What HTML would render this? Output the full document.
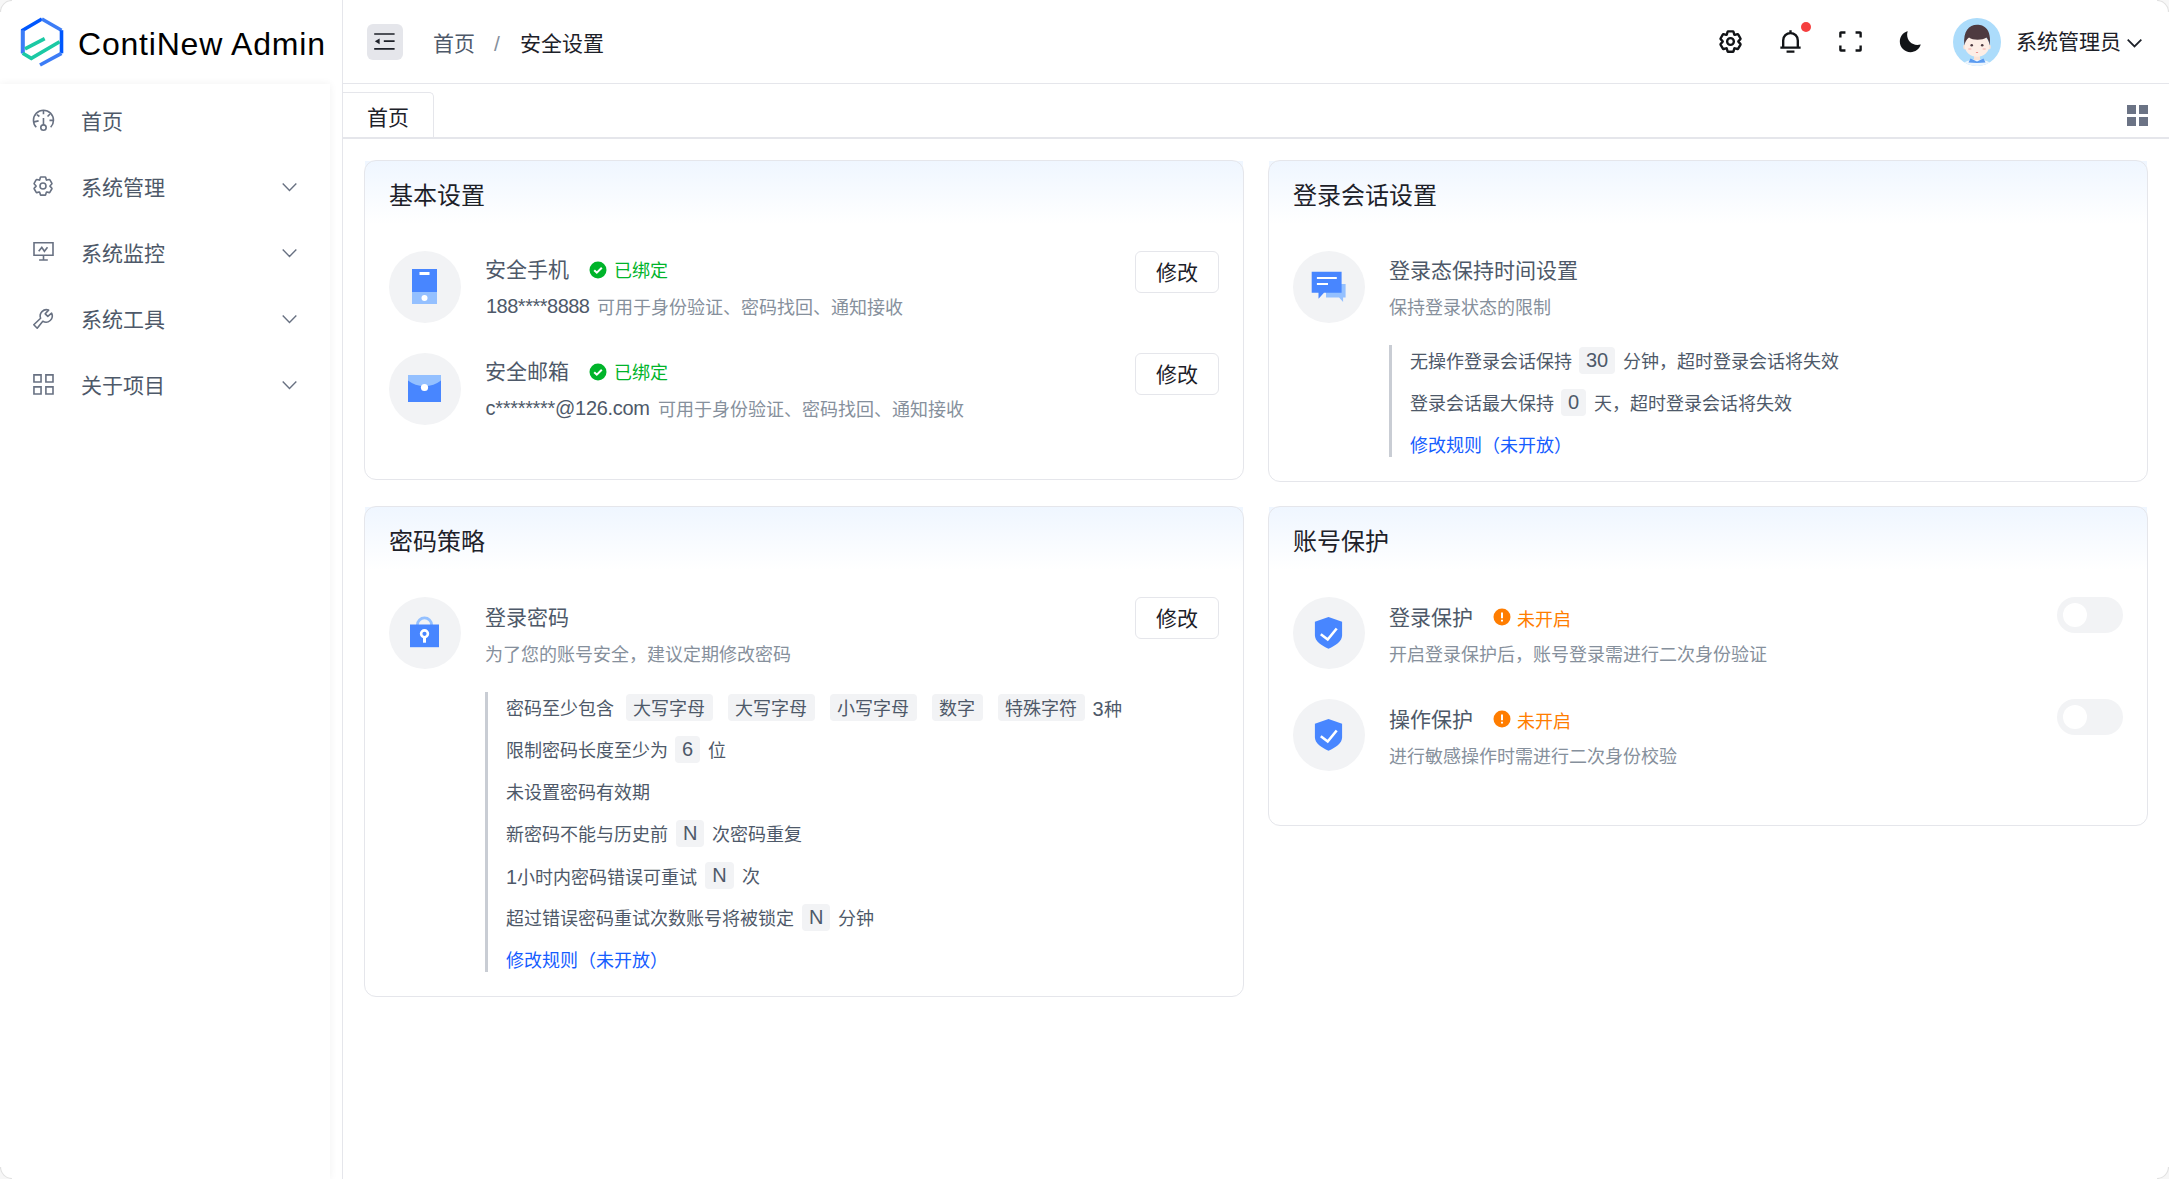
<!DOCTYPE html>
<html lang="zh-CN"><head><meta charset="utf-8">
<style>
*{box-sizing:border-box;margin:0;padding:0}
html,body{width:2169px;height:1179px;overflow:hidden;background:#fff}
body{position:relative;font-family:"Liberation Sans",sans-serif;color:#1d2129}
.a{position:absolute}
.t{position:absolute;white-space:pre;line-height:1}
svg{position:absolute;overflow:visible}
.side{left:0;top:0;width:343px;height:1179px;border-right:1px solid #e5e6eb;background:#fff}
.menu{left:0;top:84px;width:330px;height:1095px;background:#fff;box-shadow:0 0 8px rgba(0,0,0,0.06)}
.mi{font-size:21px;color:#4e5969}
.ic{stroke:#687182;fill:none;stroke-width:3.2}
.card{position:absolute;border:1px solid #e5e6eb;border-radius:12px}
.card .hd{position:absolute;left:0;top:0;right:0;height:64px;background:linear-gradient(180deg,#eff6ff 0%,#fff 100%)}
.ctitle{font-size:24px;color:#1d2129}
.circ{position:absolute;width:72px;height:72px;border-radius:50%;background:#f2f3f5}
.itit{font-size:21px;color:#4e5969}
.desc{font-size:18px;color:#86909c}
.btn{position:absolute;width:84px;height:42px;border:1px solid #e5e6eb;border-radius:6px;background:#fff;font-size:21px;color:#1d2129;text-align:center;line-height:42px}
.bar{position:absolute;width:3px;background:#c9cdd4}
.ln{font-size:18px;color:#4e5969}
.tag{display:inline-block;background:#f2f3f5;border-radius:4px;height:27px;line-height:27px;padding:0 7px;vertical-align:middle}
.lat{font-size:20px}
.link{font-size:18px;color:#165dff}
.sw{position:absolute;width:66px;height:36px;border-radius:18px;background:#f2f3f5}
.sw::after{content:"";position:absolute;left:6px;top:6px;width:24px;height:24px;border-radius:50%;background:#fff}
</style></head><body>


<!-- sidebar -->
<div class="a side"></div>
<div class="a menu"></div>
<svg style="left:0;top:0" width="90" height="84" viewBox="0 0 90 84">
  <g fill="none" stroke-width="3.6" stroke-linecap="butt" stroke-linejoin="miter">
    <path d="M22.7 53.3 V30.2 L41.9 19" stroke="#0057fe"/>
    <path d="M22.7 53.3 V30.2" stroke="#3c7cf6"/>
    <path d="M41.9 19 L61.5 30.2" stroke="#3c7cf6"/>
    <path d="M61.5 30.2 V53.3" stroke="#0057fe"/>
    <path d="M61.5 53.3 L40 65" stroke="#3c7cf6"/>
    <path d="M22.7 53.3 L31.3 58.4 L59.6 41.8" stroke="#1bc9a4"/>
    <path d="M25 48.8 L44.7 38.6" stroke="#1bc9a4"/>
  </g>
</svg>
<div class="t" style="left:78px;top:28px;font-size:32px;letter-spacing:0.8px;color:#000">ContiNew Admin</div>

<!-- menu items -->
<svg style="left:31px;top:108px" width="24" height="24" viewBox="0 0 48 48" class="ic"><path d="M10.55 38.47A20 20 0 1 1 39.33 38.47"/><path d="M24.94 4.5V12.6M5.9 27.8L15.2 25.7M36.9 24.8H44.5M11.9 13.2L16.8 17M33.1 17L38 12.1M24.94 20.2V33.8"/><circle cx="24.94" cy="39.2" r="5.4"/></svg>
<div class="t mi" style="left:81px;top:111px">首页</div>

<svg style="left:31px;top:174px" width="24" height="24" viewBox="0 0 48 48" class="ic"><path d="M18.8 6.7A1 1 0 0 1 19.8 6h8.5a1 1 0 0 1 1 .7l1.3 4.7a1 1 0 0 0 1.2.7l4.7-1.2a1 1 0 0 1 1.1.5l4.2 7.3a1 1 0 0 1-.2 1.2l-3.4 3.5a1 1 0 0 0 0 1.4l3.4 3.5a1 1 0 0 1 .2 1.2l-4.2 7.3a1 1 0 0 1-1.1.5l-4.7-1.2a1 1 0 0 0-1.2.7l-1.3 4.7a1 1 0 0 1-1 .7h-8.5a1 1 0 0 1-1-.7l-1.3-4.7a1 1 0 0 0-1.2-.7l-4.7 1.2a1 1 0 0 1-1.1-.5l-4.2-7.3a1 1 0 0 1 .2-1.2l3.4-3.5a1 1 0 0 0 0-1.4l-3.4-3.5a1 1 0 0 1-.2-1.2l4.2-7.3a1 1 0 0 1 1.1-.5l4.7 1.2a1 1 0 0 0 1.2-.7z"/><circle cx="24" cy="24" r="6"/></svg>
<div class="t mi" style="left:81px;top:177px">系统管理</div>

<svg style="left:31px;top:240px" width="24" height="24" viewBox="0 0 48 48" class="ic"><path d="M6 5.6H44V30.4H6z"/><path d="M25 30.4V40M16.2 40H33.6"/><path d="M15.4 22.6L21.6 14.8 26.8 22.6 33 14.6"/></svg>
<div class="t mi" style="left:81px;top:243px">系统监控</div>

<svg style="left:31px;top:306px" width="24" height="24" viewBox="0 0 48 48" class="ic"><path d="M5.6 37.6L19.2 24.4A12.5 12.5 0 0 1 35.2 8.2L28.4 15.6 33.6 20.6 41.2 14.4A12.5 12.5 0 0 1 23.6 30.6L12.4 44.4z" stroke-linejoin="round"/></svg>
<div class="t mi" style="left:81px;top:309px">系统工具</div>

<svg style="left:31px;top:372px" width="24" height="24" viewBox="0 0 48 48" class="ic"><path d="M5.9 5.8h14.2v14.2H5.9zM29.8 5.8h14.2v14.2H29.8zM5.9 29.7h14.2v14.2H5.9zM29.8 29.7h14.2v14.2H29.8z"/></svg>
<div class="t mi" style="left:81px;top:375px">关于项目</div>

<svg style="left:279px;top:176px" width="21" height="21" viewBox="0 0 48 48" class="ic"><path d="M39.6 17.4L24 33 8.5 17.4"/></svg>
<svg style="left:279px;top:242px" width="21" height="21" viewBox="0 0 48 48" class="ic"><path d="M39.6 17.4L24 33 8.5 17.4"/></svg>
<svg style="left:279px;top:308px" width="21" height="21" viewBox="0 0 48 48" class="ic"><path d="M39.6 17.4L24 33 8.5 17.4"/></svg>
<svg style="left:279px;top:374px" width="21" height="21" viewBox="0 0 48 48" class="ic"><path d="M39.6 17.4L24 33 8.5 17.4"/></svg>

<!-- header -->
<div class="a" style="left:343px;top:83px;width:1826px;height:1px;background:#e5e6eb"></div>
<div class="a" style="left:367px;top:24px;width:36px;height:36px;border-radius:6px;background:#e5e6eb"></div>
<svg style="left:373px;top:30px" width="24" height="24" viewBox="0 0 48 48" fill="none" stroke="#1d2129" stroke-width="3.4"><path d="M2.4 8H43.2M21.6 22.4H43.2M2.4 37.6H43.2"/><path d="M13.2 16.8L3.6 22.6 13.2 28.6z" fill="#1d2129" stroke="none"/></svg>
<div class="t" style="left:433px;top:33px;font-size:21px;color:#4e5969">首页</div>
<div class="t" style="left:494px;top:33px;font-size:21px;color:#86909c">/</div>
<div class="t" style="left:520px;top:33px;font-size:21px;color:#1d2129">安全设置</div>

<svg style="left:1717px;top:28px" width="27" height="27" viewBox="0 0 48 48" fill="none" stroke="#121417" stroke-width="4.2"><path d="M18.8 6.7A1 1 0 0 1 19.8 6h8.5a1 1 0 0 1 1 .7l1.3 4.7a1 1 0 0 0 1.2.7l4.7-1.2a1 1 0 0 1 1.1.5l4.2 7.3a1 1 0 0 1-.2 1.2l-3.4 3.5a1 1 0 0 0 0 1.4l3.4 3.5a1 1 0 0 1 .2 1.2l-4.2 7.3a1 1 0 0 1-1.1.5l-4.7-1.2a1 1 0 0 0-1.2.7l-1.3 4.7a1 1 0 0 1-1 .7h-8.5a1 1 0 0 1-1-.7l-1.3-4.7a1 1 0 0 0-1.2-.7l-4.7 1.2a1 1 0 0 1-1.1-.5l-4.2-7.3a1 1 0 0 1 .2-1.2l3.4-3.5a1 1 0 0 0 0-1.4l-3.4-3.5a1 1 0 0 1-.2-1.2l4.2-7.3a1 1 0 0 1 1.1-.5l4.7 1.2a1 1 0 0 0 1.2-.7z"/><circle cx="24" cy="24" r="6"/></svg>
<svg style="left:1777px;top:28px" width="27" height="27" viewBox="0 0 48 48" fill="none" stroke="#121417" stroke-width="4.2"><path d="M24 9c7.2 0 13 5.8 13 13v13H11V22c0-7.2 5.8-13 13-13zm0 0V4M6 35h36M17 42h14"/></svg>
<div class="a" style="left:1801px;top:22px;width:10px;height:10px;border-radius:50%;background:#f53f3f"></div>
<svg style="left:1837px;top:28px" width="27" height="27" viewBox="0 0 48 48" fill="none" stroke="#121417" stroke-width="4.2"><path d="M42 17V9a1 1 0 0 0-1-1h-8M6 17V9a1 1 0 0 1 1-1h8m27 23v8a1 1 0 0 1-1 1h-8M6 31v8a1 1 0 0 0 1 1h8"/></svg>
<svg style="left:1897px;top:28px" width="27" height="27" viewBox="0 0 48 48"><path fill="#121417" d="M42.1 29.8c.1-.4-.3-.7-.6-.6A18 18 0 0 1 36 30c-9.9 0-18-8.1-18-18 0-1.9.3-3.7.8-5.5.1-.4-.2-.8-.6-.6C10.6 8.3 5 15.5 5 24c0 10.5 8.5 19 19 19 8.5 0 15.7-5.6 18.1-13.2z"/></svg>

<!-- avatar -->
<svg style="left:1953px;top:18px" width="48" height="48" viewBox="0 0 48 48">
  <defs><clipPath id="avc"><circle cx="24" cy="24" r="24"/></clipPath></defs>
  <circle cx="24" cy="24" r="24" fill="#acdcfb"/>
  <g clip-path="url(#avc)">
    <path d="M6 52 Q8 42 24 41 Q40 42 42 52z" fill="#eef6fd"/>
    <rect x="21" y="36" width="6" height="6" fill="#fbe3d6"/>
    <path d="M17.5 40.5 L24 43.5 L30.5 40.5 L32.5 44.5 L24 45 L15.5 44.5z" fill="#5b9bf0"/>
    <ellipse cx="11.8" cy="29" rx="1.6" ry="2.4" fill="#fbe3d6"/><ellipse cx="36.2" cy="29" rx="1.6" ry="2.4" fill="#fbe3d6"/>
    <ellipse cx="24" cy="27.5" rx="12.3" ry="11.2" fill="#fdeee6"/>
    <path d="M11.3 27.5 C10 13, 16 6.8, 24 6.8 C32 6.8, 38.5 12, 36.8 27.5 C36 23.5, 35 21.5, 33.5 19.5 C29 22.5, 20 22.5, 16 19.5 C13.5 21.5, 12 24, 11.3 27.5z" fill="#4e3a40"/>
    <circle cx="18.7" cy="27.3" r="1.3" fill="#4e3a40"/><circle cx="29.2" cy="27.3" r="1.3" fill="#4e3a40"/>
    <ellipse cx="16.8" cy="31" rx="1.8" ry="1.1" fill="#f8c9c4"/><ellipse cx="31.2" cy="31" rx="1.8" ry="1.1" fill="#f8c9c4"/>
    <path d="M22.6 34.2 Q24 35.6 25.4 34.2z" fill="#e0524f"/>
  </g>
</svg>
<div class="t" style="left:2016px;top:31px;font-size:21px;color:#1d2129">系统管理员</div>
<svg style="left:2124px;top:32px" width="21" height="21" viewBox="0 0 48 48" fill="none" stroke="#1d2129" stroke-width="4"><path d="M39.6 17.4L24 33 8.5 17.4"/></svg>

<!-- tab bar -->
<div class="a" style="left:343px;top:92px;width:91px;height:45px;border:1px solid #e5e6eb;border-left:none;border-bottom:none;border-radius:0 5px 0 0;background:#fff"></div>
<div class="a" style="left:343px;top:137px;width:1826px;height:2px;background:#e5e6eb"></div>
<div class="t" style="left:367px;top:107px;font-size:21px;color:#1d2129">首页</div>
<div class="a" style="left:2127px;top:105px;width:9px;height:9px;background:#6b7385"></div>
<div class="a" style="left:2139px;top:105px;width:9px;height:9px;background:#6b7385"></div>
<div class="a" style="left:2127px;top:117px;width:9px;height:9px;background:#6b7385"></div>
<div class="a" style="left:2139px;top:117px;width:9px;height:9px;background:#6b7385"></div>

<div class="a" style="left:365px;top:161px;width:878px;height:63px;background:linear-gradient(180deg,#eff6ff 0%,#fff 100%)"></div><div class="card" style="left:364px;top:160px;width:880px;height:320px"></div>
<div class="t ctitle" style="left:389px;top:184px">基本设置</div>
<div class="circ" style="left:389px;top:251px"></div>
<svg style="left:389px;top:251px" width="72" height="72" viewBox="389 251 72 72"><rect x="412" y="269" width="25" height="23" fill="#4886ff"/><rect x="412" y="292" width="25" height="12" fill="#94c0ff"/><rect x="419.5" y="272" width="10" height="3" fill="#fff"/><circle cx="424.5" cy="298" r="3" fill="#fff"/></svg>
<div class="t itit" style="left:485px;top:259px;">安全手机</div>
<svg style="left:588.5px;top:260.5px" width="18" height="18" viewBox="0 0 18 18"><circle cx="9" cy="9" r="8.5" fill="#00b42a"/><path d="M5.2 9.2l2.6 2.5 5-5" fill="none" stroke="#fff" stroke-width="2"/></svg>
<div class="t desc" style="left:614px;top:262px;color:#00b42a">已绑定</div>
<div class="t itit" style="left:486px;top:296px;font-size:20px;letter-spacing:-0.5px;color:#4e5969">188****8888</div>
<div class="t desc" style="left:597px;top:299px;">可用于身份验证、密码找回、通知接收</div>
<div class="btn" style="left:1135px;top:251px">修改</div>
<div class="circ" style="left:389px;top:353px"></div>
<svg style="left:389px;top:353px" width="72" height="72" viewBox="389 353 72 72"><rect x="408" y="375" width="33" height="27" fill="#4886ff"/><path d="M408 375h33v5.5Q434 386 424.5 386Q415 386 408 380.5z" fill="#94c0ff"/><circle cx="424.5" cy="387.5" r="3.6" fill="#fff"/></svg>
<div class="t itit" style="left:485px;top:361px;">安全邮箱</div>
<svg style="left:588.5px;top:362.5px" width="18" height="18" viewBox="0 0 18 18"><circle cx="9" cy="9" r="8.5" fill="#00b42a"/><path d="M5.2 9.2l2.6 2.5 5-5" fill="none" stroke="#fff" stroke-width="2"/></svg>
<div class="t desc" style="left:614px;top:364px;color:#00b42a">已绑定</div>
<div class="t itit" style="left:485.5px;top:398px;font-size:20px;letter-spacing:-0.3px;color:#4e5969">c********@126.com</div>
<div class="t desc" style="left:658px;top:401px;">可用于身份验证、密码找回、通知接收</div>
<div class="btn" style="left:1135px;top:353px">修改</div>
<div class="a" style="left:1269px;top:161px;width:878px;height:63px;background:linear-gradient(180deg,#eff6ff 0%,#fff 100%)"></div><div class="card" style="left:1268px;top:160px;width:880px;height:322px"></div>
<div class="t ctitle" style="left:1293px;top:184px">登录会话设置</div>
<div class="circ" style="left:1293px;top:251px"></div>
<svg style="left:1293px;top:251px" width="72" height="72" viewBox="1293 251 72 72"><path d="M1326 284h19.6v13.5h-2.5v4.5l-4-4.5H1326z" fill="#94c0ff"/><path d="M1311.7 271.7h29.9v21.1H1324l-5.5 6v-6h-6.8z" fill="#4886ff"/><path d="M1316.9 278h19.9M1316.9 284h11.1" stroke="#fff" stroke-width="2.2"/></svg>
<div class="t itit" style="left:1388.5px;top:260px;">登录态保持时间设置</div>
<div class="t desc" style="left:1388.5px;top:299px;">保持登录状态的限制</div>
<div class="bar" style="left:1389px;top:345px;height:112px"></div>
<div class="a" style="left:1410px;top:346.5px;height:27px;display:flex;align-items:center;white-space:pre"><span class="ln" style="line-height:1;position:relative;top:1.5px">无操作登录会话保持</span><span class="tag ln" style="margin:0 8px 0 7px"><span class="lat">30</span></span><span class="ln" style="line-height:1;position:relative;top:1.5px">分钟，超时登录会话将失效</span></div>
<div class="a" style="left:1410px;top:388.5px;height:27px;display:flex;align-items:center;white-space:pre"><span class="ln" style="line-height:1;position:relative;top:1.5px">登录会话最大保持</span><span class="tag ln" style="margin:0 8px 0 7px"><span class="lat">0</span></span><span class="ln" style="line-height:1;position:relative;top:1.5px">天，超时登录会话将失效</span></div>
<div class="t link" style="left:1410px;top:437px;">修改规则（未开放）</div>
<div class="a" style="left:365px;top:507px;width:878px;height:63px;background:linear-gradient(180deg,#eff6ff 0%,#fff 100%)"></div><div class="card" style="left:364px;top:506px;width:880px;height:491px"></div>
<div class="t ctitle" style="left:389px;top:530px">密码策略</div>
<div class="circ" style="left:389px;top:597px"></div>
<svg style="left:389px;top:597px" width="72" height="72" viewBox="389 597 72 72"><path d="M417.4 625a7.1 7.1 0 0 1 14.2 0" fill="none" stroke="#94c0ff" stroke-width="2.8"/><rect x="410" y="624.5" width="29" height="22.7" fill="#4886ff"/><circle cx="424.5" cy="633.8" r="3.4" fill="none" stroke="#fff" stroke-width="2.6"/><rect x="423" y="636" width="3" height="6.7" fill="#fff"/></svg>
<div class="t itit" style="left:485px;top:607px;">登录密码</div>
<div class="t desc" style="left:485px;top:646px;">为了您的账号安全，建议定期修改密码</div>
<div class="btn" style="left:1135px;top:597px">修改</div>
<div class="bar" style="left:485px;top:692px;height:280px"></div>
<div class="a" style="left:506px;top:693.5px;height:27px;display:flex;align-items:center;white-space:pre"><span class="ln" style="line-height:1;position:relative;top:1.5px">密码至少包含</span><span class="tag ln" style="margin:0 15.5px 0 12px;padding:0 7.25px;line-height:30px">大写字母</span><span class="tag ln" style="margin:0 15.5px 0 0px;padding:0 7.25px;line-height:30px">大写字母</span><span class="tag ln" style="margin:0 15.5px 0 0px;padding:0 7.25px;line-height:30px">小写字母</span><span class="tag ln" style="margin:0 15.5px 0 0px;padding:0 7.25px;line-height:30px">数字</span><span class="tag ln" style="margin:0 8px 0 0px;padding:0 7.25px;line-height:30px">特殊字符</span><span class="ln" style="line-height:1;position:relative;top:1.5px"><span class="lat">3</span>种</span></div>
<div class="a" style="left:506px;top:735.5px;height:27px;display:flex;align-items:center;white-space:pre"><span class="ln" style="line-height:1;position:relative;top:1.5px">限制密码长度至少为</span><span class="tag ln" style="margin:0 8px 0 7px"><span class="lat">6</span></span><span class="ln" style="line-height:1;position:relative;top:1.5px">位</span></div>
<div class="a" style="left:506px;top:777.5px;height:27px;display:flex;align-items:center;white-space:pre"><span class="ln" style="line-height:1;position:relative;top:1.5px">未设置密码有效期</span></div>
<div class="a" style="left:506px;top:819.5px;height:27px;display:flex;align-items:center;white-space:pre"><span class="ln" style="line-height:1;position:relative;top:1.5px">新密码不能与历史前</span><span class="tag ln" style="margin:0 8px 0 8px"><span class="lat">N</span></span><span class="ln" style="line-height:1;position:relative;top:1.5px">次密码重复</span></div>
<div class="a" style="left:506px;top:861.5px;height:27px;display:flex;align-items:center;white-space:pre"><span class="ln" style="line-height:1;position:relative;top:1.5px"><span class="lat">1</span>小时内密码错误可重试</span><span class="tag ln" style="margin:0 8px 0 8px"><span class="lat">N</span></span><span class="ln" style="line-height:1;position:relative;top:1.5px">次</span></div>
<div class="a" style="left:506px;top:903.5px;height:27px;display:flex;align-items:center;white-space:pre"><span class="ln" style="line-height:1;position:relative;top:1.5px">超过错误密码重试次数账号将被锁定</span><span class="tag ln" style="margin:0 8px 0 8px"><span class="lat">N</span></span><span class="ln" style="line-height:1;position:relative;top:1.5px">分钟</span></div>
<div class="t link" style="left:506px;top:952px;">修改规则（未开放）</div>
<div class="a" style="left:1269px;top:507px;width:878px;height:63px;background:linear-gradient(180deg,#eff6ff 0%,#fff 100%)"></div><div class="card" style="left:1268px;top:506px;width:880px;height:320px"></div>
<div class="t ctitle" style="left:1293px;top:530px">账号保护</div>
<div class="circ" style="left:1293px;top:597px"></div>
<svg style="left:1293px;top:597px" width="72" height="72" viewBox="0 0 72 72"><path d="M35.5 20l13.6 4.8v13.2c0 6.5-6.2 10.3-13.6 13.8-7.4-3.5-13.6-7.3-13.6-13.8V24.8z" fill="#4886ff"/><path d="M27.8 37.3l6.9 5.2 9-11" fill="none" stroke="#fff" stroke-width="2.6"/></svg>
<div class="t itit" style="left:1389px;top:607px;">登录保护</div>
<svg style="left:1492.5px;top:607.7px" width="18" height="18" viewBox="0 0 18 18"><circle cx="9" cy="9" r="8.5" fill="#ff7d00"/><path d="M9 4.6v5.6M9 11.8v1.8" fill="none" stroke="#fff" stroke-width="2"/></svg>
<div class="t desc" style="left:1517px;top:611px;color:#ff7d00">未开启</div>
<div class="t desc" style="left:1389px;top:646px;">开启登录保护后，账号登录需进行二次身份验证</div>
<div class="sw" style="left:2057px;top:597px"></div>
<div class="circ" style="left:1293px;top:699px"></div>
<svg style="left:1293px;top:699px" width="72" height="72" viewBox="0 0 72 72"><path d="M35.5 20l13.6 4.8v13.2c0 6.5-6.2 10.3-13.6 13.8-7.4-3.5-13.6-7.3-13.6-13.8V24.8z" fill="#4886ff"/><path d="M27.8 37.3l6.9 5.2 9-11" fill="none" stroke="#fff" stroke-width="2.6"/></svg>
<div class="t itit" style="left:1389px;top:709px;">操作保护</div>
<svg style="left:1492.5px;top:709.7px" width="18" height="18" viewBox="0 0 18 18"><circle cx="9" cy="9" r="8.5" fill="#ff7d00"/><path d="M9 4.6v5.6M9 11.8v1.8" fill="none" stroke="#fff" stroke-width="2"/></svg>
<div class="t desc" style="left:1517px;top:713px;color:#ff7d00">未开启</div>
<div class="t desc" style="left:1389px;top:748px;">进行敏感操作时需进行二次身份校验</div>
<div class="sw" style="left:2057px;top:699px"></div>

<svg style="left:0;top:0" width="14" height="14" viewBox="0 0 14 14"><path d="M0 0H12A12 12 0 0 0 0 12z" fill="#f7f7f7"/><path d="M12 0.5A11.5 11.5 0 0 0 0.5 12" fill="none" stroke="#e2e2e2" stroke-width="1.2"/></svg>
<svg style="left:2155px;top:0" width="14" height="14" viewBox="0 0 14 14"><path d="M14 0H2A12 12 0 0 1 14 12z" fill="#f7f7f7"/><path d="M2 0.5A11.5 11.5 0 0 1 13.5 12" fill="none" stroke="#e2e2e2" stroke-width="1.2"/></svg>
<svg style="left:0;top:1165px" width="14" height="14" viewBox="0 0 14 14"><path d="M0 14H12A12 12 0 0 1 0 2z" fill="#f7f7f7"/><path d="M12 13.5A11.5 11.5 0 0 1 0.5 2" fill="none" stroke="#e2e2e2" stroke-width="1.2"/></svg>
<svg style="left:2155px;top:1165px" width="14" height="14" viewBox="0 0 14 14"><path d="M14 14H2A12 12 0 0 0 14 2z" fill="#f7f7f7"/><path d="M2 13.5A11.5 11.5 0 0 0 13.5 2" fill="none" stroke="#e2e2e2" stroke-width="1.2"/></svg>
</body></html>
